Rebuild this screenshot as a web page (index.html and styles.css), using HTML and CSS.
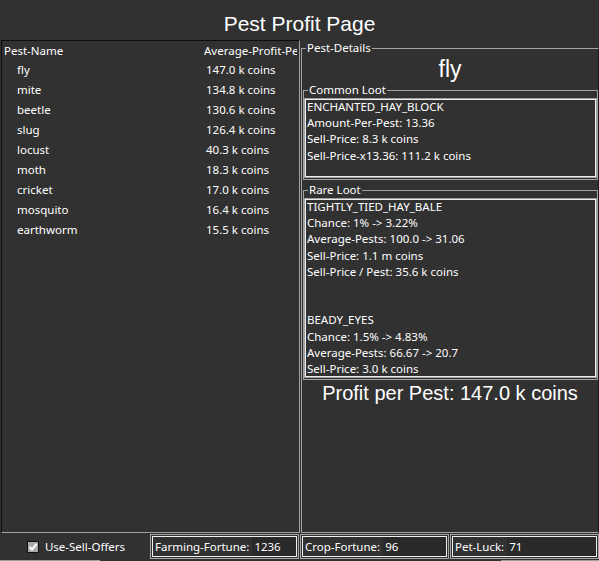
FILE: index.html
```html
<!DOCTYPE html>
<html lang="en">
<head>
<meta charset="utf-8">
<title>Pest Profit Page</title>
<link rel="stylesheet" href="styles.css">
</head>
<body>
<div class="app">
  <h1 class="title">Pest Profit Page</h1>
  <div class="main">
    <div class="list">
      <div class="list-head"><span class="c1">Pest-Name</span><span class="c2">Average-Profit-Per-Pest</span></div>
      <div class="row"><span class="c1">fly</span><span class="c2">147.0 k coins</span></div>
      <div class="row"><span class="c1">mite</span><span class="c2">134.8 k coins</span></div>
      <div class="row"><span class="c1">beetle</span><span class="c2">130.6 k coins</span></div>
      <div class="row"><span class="c1">slug</span><span class="c2">126.4 k coins</span></div>
      <div class="row"><span class="c1">locust</span><span class="c2">40.3 k coins</span></div>
      <div class="row"><span class="c1">moth</span><span class="c2">18.3 k coins</span></div>
      <div class="row"><span class="c1">cricket</span><span class="c2">17.0 k coins</span></div>
      <div class="row"><span class="c1">mosquito</span><span class="c2">16.4 k coins</span></div>
      <div class="row"><span class="c1">earthworm</span><span class="c2">15.5 k coins</span></div>
    </div>
    <fieldset class="details">
      <legend>Pest-Details</legend>
      <div class="pest-name">fly</div>
      <fieldset class="loot">
        <legend>Common Loot</legend>
        <div class="textbox common-box">
          <div>ENCHANTED_HAY_BLOCK</div>
          <div>Amount-Per-Pest: 13.36</div>
          <div>Sell-Price: 8.3 k coins</div>
          <div>Sell-Price-x13.36: 111.2 k coins</div>
        </div>
      </fieldset>
      <fieldset class="loot rare">
        <legend>Rare Loot</legend>
        <div class="textbox rare-box">
          <div>TIGHTLY_TIED_HAY_BALE</div>
          <div>Chance: 1% -&gt; 3.22%</div>
          <div>Average-Pests: 100.0 -&gt; 31.06</div>
          <div>Sell-Price: 1.1 m coins</div>
          <div>Sell-Price / Pest: 35.6 k coins</div>
          <div class="blank">&nbsp;</div>
          <div class="blank">&nbsp;</div>
          <div>BEADY_EYES</div>
          <div>Chance: 1.5% -&gt; 4.83%</div>
          <div>Average-Pests: 66.67 -&gt; 20.7</div>
          <div>Sell-Price: 3.0 k coins</div>
        </div>
      </fieldset>
      <div class="profit">Profit per Pest: 147.0 k coins</div>
    </fieldset>
  </div>
  <div class="bottom">
    <label class="check">
      <svg class="checkbox" width="12" height="12" viewBox="0 0 12 12">
        <rect x="0.5" y="0.5" width="11" height="11" fill="#a9a9a9" stroke="#111"/>
        <path d="M2.5 6 L5 8.5 L9.5 3" fill="none" stroke="#fff" stroke-width="2"/>
      </svg>
      <span>Use-Sell-Offers</span>
    </label>
    <div class="entry"><div class="entry-inner"><span class="elabel">Farming-Fortune:</span><span class="efield">1236</span></div></div>
    <div class="entry"><div class="entry-inner"><span class="elabel">Crop-Fortune:</span><span class="efield">96</span></div></div>
    <div class="entry"><div class="entry-inner"><span class="elabel">Pet-Luck:</span><span class="efield">71</span></div></div>
  </div>
  <div class="footer">
    <div class="stub left"></div>
    <div class="stub right"></div>
  </div>
</div>
</body>
</html>
```

FILE: styles.css
```css
html, body {
  margin: 0;
  padding: 0;
}
body {
  background: #313131;
  color: #ffffff;
  font-family: "Noto Sans", "Open Sans", sans-serif;
  font-size: 11.5px;
  width: 599px;
  height: 561px;
  overflow: hidden;
}
.app {
  width: 599px;
  height: 561px;
  display: flex;
  flex-direction: column;
}
.title {
  margin: 0;
  height: 40px;
  box-sizing: border-box;
  padding-top: 12px;
  line-height: 24px;
  font-family: "Liberation Sans", Arial, sans-serif;
  font-weight: 400;
  font-size: 21px;
  text-align: center;
}
.main {
  display: flex;
  height: 493px;
}
.list {
  margin-left: 1px;
  width: 299px;
  height: 493px;
  box-sizing: border-box;
  border-top: 1px solid #0c0c0c;
  border-left: 1px solid #0c0c0c;
  border-right: 1px solid #9f9f9f;
  border-bottom: 1px solid #9f9f9f;
  overflow: hidden;
  white-space: nowrap;
}
.list-head {
  display: flex;
  height: 19px;
  line-height: 19px;
}
.row {
  display: flex;
  height: 20px;
  line-height: 20px;
}
.list-head .c1 {
  width: 200px;
  padding-left: 2px;
  flex: none;
}
.list-head .c2 {
  flex: none;
  width: 93px;
  overflow: hidden;
  text-overflow: clip;
}
.row .c1 {
  width: 187px;
  padding-left: 15px;
  flex: none;
}
.row .c2 {
  flex: none;
  padding-left: 2px;
}
fieldset {
  margin: 0;
  padding: 0;
  min-width: 0;
  box-sizing: border-box;
  border: 1px solid #a3a3a3;
}
legend {
  margin-left: 4px;
  padding: 0 1px;
  line-height: 16px;
  font-size: 11.5px;
}
.details {
  margin-left: 1px;
  width: 298px;
  height: 493px;
  border-right-color: #1a1a1a;
}
.pest-name {
  height: 26px;
  line-height: 26px;
  text-align: center;
  font-family: "Liberation Sans", Arial, sans-serif;
  font-size: 23px;
}
.loot {
  margin-left: 1px;
  width: 295px;
  padding-bottom: 1px;
}
.loot.rare {
  margin-top: 2px;
}
.textbox {
  box-sizing: border-box;
  border: 1px solid #a0a0a0;
  box-shadow: inset 0 0 0 1px #ececec;
  padding: 0 2px;
  line-height: 16.2px;
  white-space: nowrap;
  overflow: hidden;
}
.common-box {
  height: 80px;
}
.rare-box {
  height: 180px;
}
.profit {
  height: 26px;
  line-height: 26px;
  text-align: center;
  font-family: "Liberation Sans", Arial, sans-serif;
  font-size: 20px;
}
.bottom {
  display: grid;
  grid-template-columns: 150px 150px 150px 150px;
  height: 27px;
}
.check {
  display: flex;
  align-items: center;
  justify-content: center;
  gap: 6px;
  padding-left: 2px;
}
.checkbox {
  flex: none;
}
.entry {
  margin-top: 1px;
  width: 149px;
  height: 25px;
  box-sizing: border-box;
  border: 1px solid #a6a6a6;
  padding: 1px;
}
.entry-inner {
  height: 100%;
  box-sizing: border-box;
  border: 1px solid #f0f0f0;
  display: flex;
  align-items: stretch;
  line-height: 19px;
  white-space: nowrap;
}
.elabel {
  padding-left: 2px;
  padding-right: 3px;
  flex: none;
}
.efield {
  flex: 1;
  background: #292929;
  padding-left: 2px;
}
.footer {
  display: flex;
  justify-content: space-between;
  height: 1px;
}
.stub {
  height: 1px;
  background: #a0a0a0;
}
.stub.left {
  width: 100px;
}
.stub.right {
  width: 98px;
}
```
